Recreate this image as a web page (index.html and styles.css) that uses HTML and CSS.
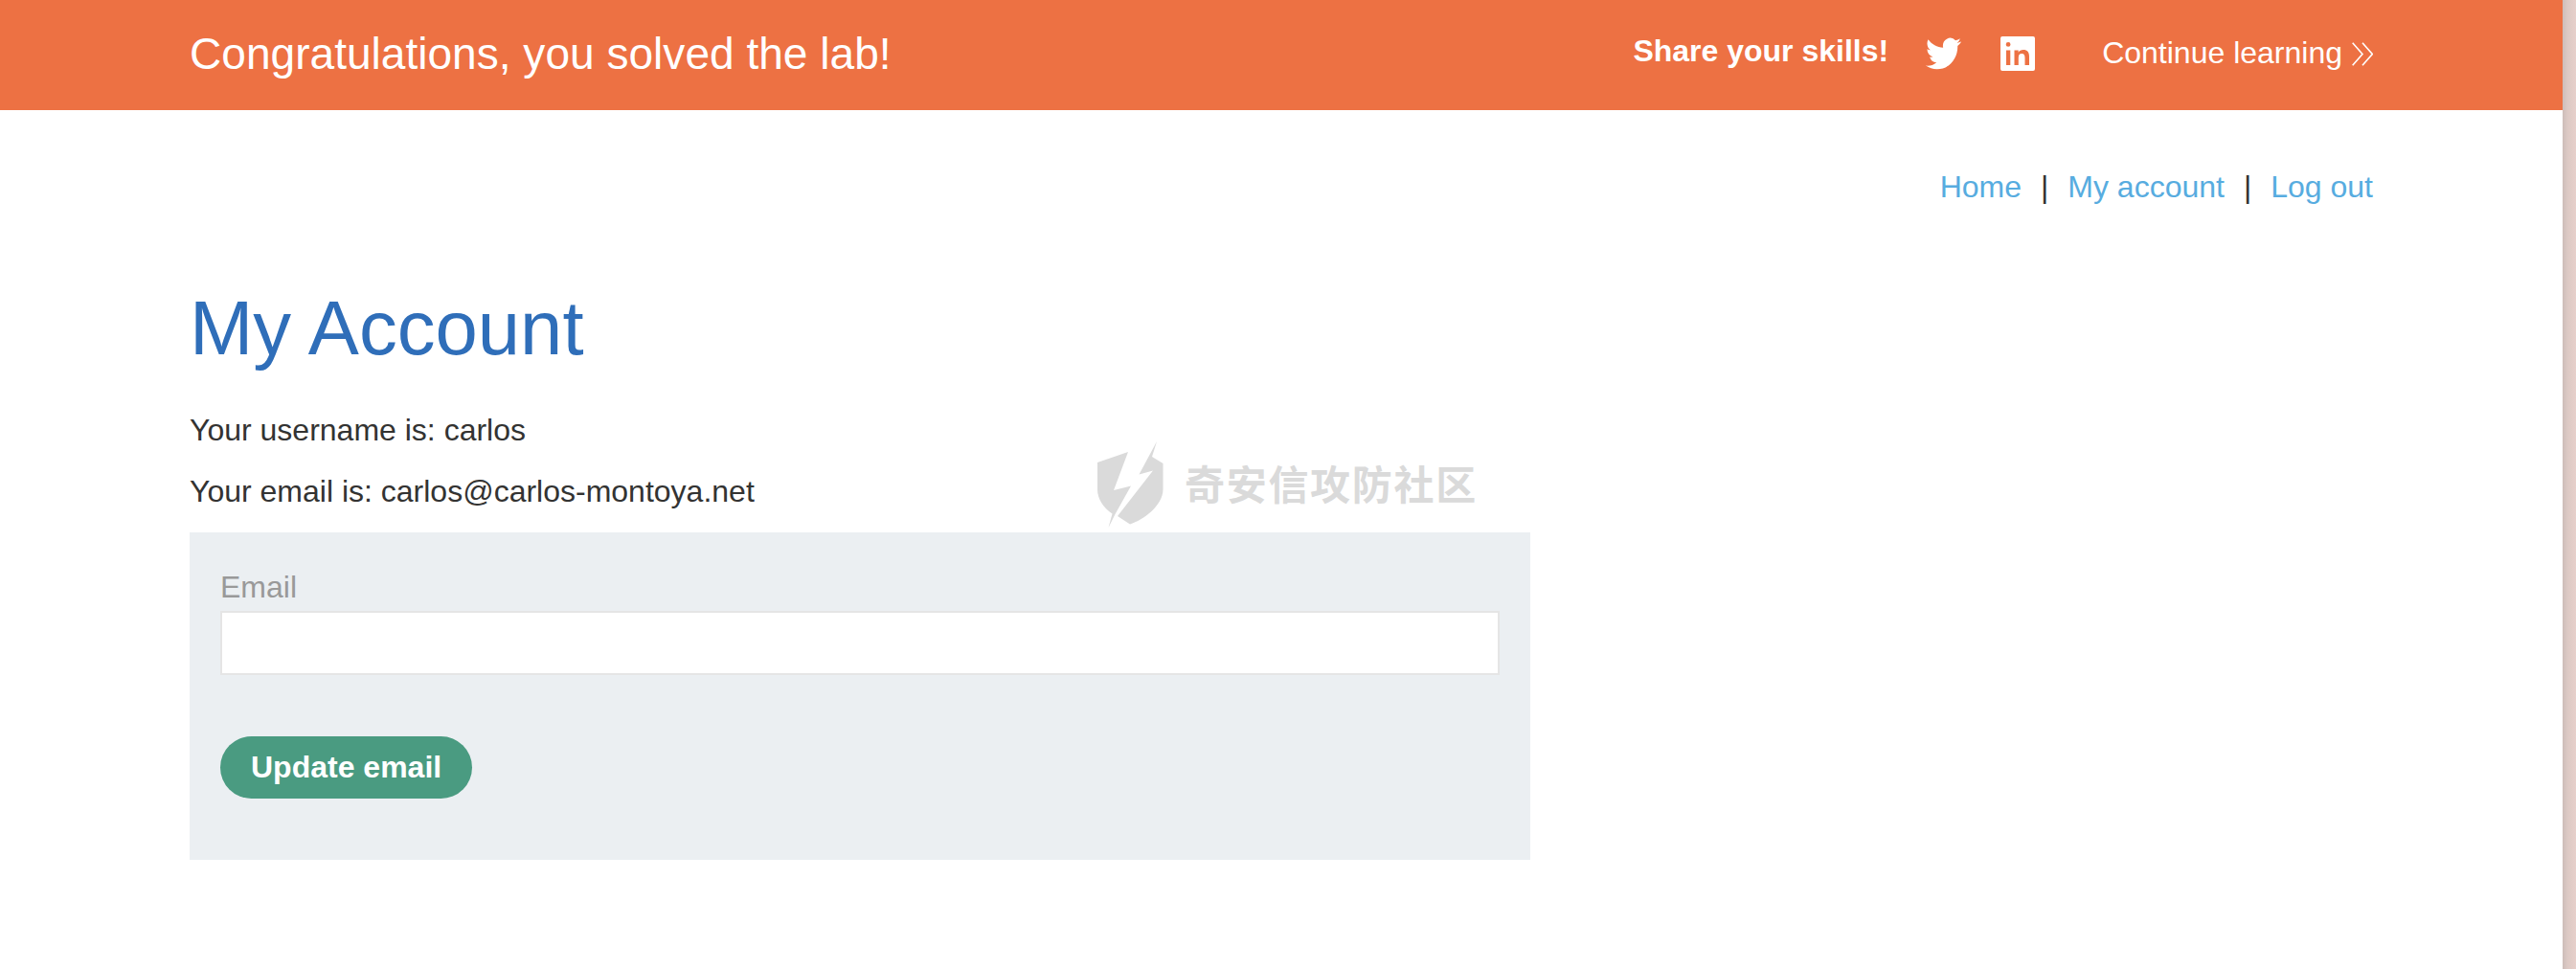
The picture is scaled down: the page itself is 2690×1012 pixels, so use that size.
FILE: index.html
```html
<!DOCTYPE html>
<html lang="en">
<head>
<meta charset="utf-8">
<title>My Account</title>
<link rel="stylesheet" href="styles.css">
</head>
<body>
<div class="page">
  <header class="banner">
    <h4 class="banner-title">Congratulations, you solved the lab!</h4>
    <div class="share">
      <span class="share-label">Share your skills!</span>
      <svg class="twitter" viewBox="0 0 24 24" preserveAspectRatio="none"><path d="M23.953 4.57a10 10 0 0 1-2.825.775 4.958 4.958 0 0 0 2.163-2.723c-.951.555-2.005.959-3.127 1.184a4.92 4.92 0 0 0-8.384 4.482C7.69 8.095 4.067 6.13 1.64 3.162a4.822 4.822 0 0 0-.666 2.475c0 1.71.87 3.213 2.188 4.096a4.904 4.904 0 0 1-2.228-.616v.06a4.923 4.923 0 0 0 3.946 4.827 4.996 4.996 0 0 1-2.212.085 4.936 4.936 0 0 0 4.604 3.417 9.867 9.867 0 0 1-6.102 2.105c-.39 0-.779-.023-1.17-.067a13.995 13.995 0 0 0 7.557 2.209c9.053 0 13.998-7.496 13.998-13.985 0-.21 0-.42-.015-.63A9.935 9.935 0 0 0 24 4.59z"/></svg>
      <svg class="linkedin" viewBox="0 0 36 36"><path fill-rule="evenodd" d="M2 0H34Q36 0 36 2V34Q36 36 34 36H2Q0 36 0 34V2Q0 0 2 0zM6 14.500V30h4.300V14.500zM8.100 6a2.400 2.400 0 1 0 0 4.800 2.400 2.400 0 0 0 0-4.800zM14.500 14.500V30h4.300v-7.800c0-2.700 1-4.200 3.400-4.200 2.300 0 3.300 1.500 3.300 4.200V30h4.500v-9c0-4.600-2-7-6.100-7-2.500 0-4.200 1-5.200 2.700v-2.200z"/></svg>
      <a class="continue">Continue learning<svg class="chevrons" viewBox="0 0 22 25"><path d="M.7.7 11 12.5.7 24.3M11 .7l10.300 11.800L11 24.300"/></svg></a>
    </div>
  </header>
  <main class="container">
    <nav class="links"><a>Home</a><span>|</span><a>My account</a><span>|</span><a>Log out</a></nav>
    <h1>My Account</h1>
    <p>Your username is: carlos</p>
    <p>Your email is: carlos@carlos-montoya.net</p>
    <form class="email-form">
      <label for="email">Email</label>
      <input id="email" type="email">
      <button type="button">Update email</button>
    </form>
  </main>
</div>
<div class="watermark">
  <svg viewBox="0 0 70 90"><path d="M0 22 32 11 17 51 35 46.500 18.500 76 11.500 90 15.500 75.500C6 69 0 60 0 50zM62 0 57 16 68.500 23V50C68.500 67 48 82 34 86.500L21 78 58 30.500 43.500 34.500z"/></svg>
  <span>奇安信攻防社区</span>
</div>
</body>
</html>
```
FILE: styles.css
```css
* {
  box-sizing: border-box;
}
body {
  margin: 0;
  height: 1012px;
  overflow: hidden;
  background: linear-gradient(to right, #cdbdb9 0, #dcc9c4 5px, #e7d0cb 14px) right / 14px 100% no-repeat;
  color: #333332;
  font: 32px/37px "Liberation Sans", Arial, sans-serif;
}
.page {
  width: 2676px;
  height: 1012px;
  background: #fff;
}
.banner {
  display: flex;
  justify-content: space-between;
  height: 115px;
  padding: 0 198px;
  background: #ed7143;
  color: #fff;
}
.banner-title {
  margin: 30px 0 0;
  font-size: 46.08px;
  font-weight: 400;
  line-height: 53px;
}
.share {
  display: flex;
  align-items: flex-start;
}
.share svg {
  fill: #fff;
}
.share-label {
  margin-top: 35px;
  font-weight: 700;
}
.twitter {
  width: 37px;
  height: 40px;
  margin: 36px 0 0 39px;
}
.linkedin {
  width: 36px;
  height: 36px;
  margin: 38px 0 0 41px;
}
.continue {
  display: flex;
  margin: 37px 0 0 70px;
}
.continue .chevrons {
  width: 22px;
  height: 25px;
  margin: 7px 0 0 10px;
  fill: none;
  stroke: #fff;
  stroke-width: 1.6;
}
.container {
  padding: 62px 198px 0;
}
.links {
  display: flex;
  justify-content: flex-end;
  gap: 20px;
}
.links a {
  color: #57ace0;
}
h1 {
  margin: 83px 0 0;
  color: #2f6eb9;
  font-size: 79.63px;
  font-weight: 400;
  line-height: 92px;
}
p {
  margin: 42px 0 0;
}
p + p {
  margin-top: 27px;
}
.email-form {
  display: flex;
  flex-direction: column;
  align-items: flex-start;
  width: 1400px;
  height: 342px;
  margin-top: 24px;
  padding: 39px 32px 0;
  background: #ebeff2;
}
label {
  color: #999;
}
input {
  width: 1336px;
  height: 67px;
  margin: 6px 0 0;
  border: 2px solid #e5e5e5;
  background: #fff;
}
button {
  height: 65px;
  margin-top: 64px;
  padding: 0 32px;
  border: 0;
  border-radius: 33px;
  background: #4a9b81;
  color: #fff;
  font: 700 32px/65px "Liberation Sans", Arial, sans-serif;
}
.watermark {
  position: absolute;
  left: 1146px;
  top: 461px;
  display: flex;
  color: #dadada;
  font: 700 42px/86px "Noto Sans CJK SC", sans-serif;
  letter-spacing: 1.700px;
}
.watermark svg {
  width: 70px;
  height: 90px;
  margin-right: 21px;
  fill: #dadada;
}
```
